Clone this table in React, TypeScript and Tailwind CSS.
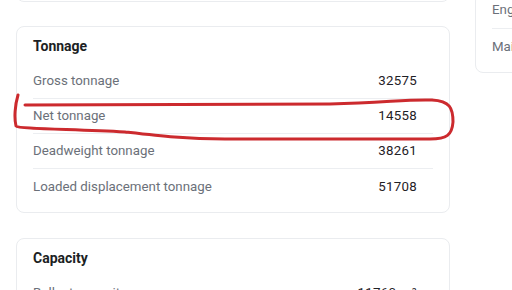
import React from "react";

type Row = { label: string; value: string };

const tonnage: Row[] = [
  { label: "Gross tonnage", value: "32575" },
  { label: "Net tonnage", value: "14558" },
  { label: "Deadweight tonnage", value: "38261" },
  { label: "Loaded displacement tonnage", value: "51708" },
];

const capacity: Row[] = [
  { label: "Ballast capacity", value: "11760 m³" },
  { label: "Fuel capacity", value: "2400 m³" },
];

function Rows({ rows }: { rows: Row[] }) {
  return (
    <div className="flex flex-col">
      {rows.map((r, i) => (
        <div
          key={r.label}
          className={
            "flex h-[35px] items-center justify-between " +
            (i < rows.length - 1 ? "border-b border-[#eceef1]" : "")
          }
        >
          <span className="text-[13.3px] text-[#6b7079]">{r.label}</span>
          <span className="pr-4 text-[13.3px] font-normal tracking-[0.3px] text-[#1f2126]">{r.value}</span>
        </div>
      ))}
    </div>
  );
}

function Card({ title, rows }: { title: string; rows: Row[] }) {
  return (
    <div className="w-[434px] rounded-lg border border-[#eaecef] bg-white px-4 pt-[9px] pb-2">
      <div className="mb-2 text-[14px] leading-5 font-bold text-[#1c1f24]">{title}</div>
      <Rows rows={rows} />
    </div>
  );
}

export default function App() {
  return (
    <div
      className="relative h-[290px] w-[512px] overflow-hidden bg-white"
      style={{ fontFamily: "Roboto, 'Noto Sans', sans-serif" }}
    >
      <div className="flex items-start gap-[25px] pl-4">
        <div className="flex flex-col">
          <div className="-mt-[38px] h-[40px] w-[434px] rounded-lg border border-[#eaecef] bg-white" />
          <div className="mt-6">
            <Card title="Tonnage" rows={tonnage} />
          </div>
          <div className="mt-[25px]">
            <Card title="Capacity" rows={capacity} />
          </div>
        </div>
        <div className="-mt-[7px] w-[220px] shrink-0 rounded-lg border border-[#eaecef] bg-white pl-4 pb-2">
          <div className="flex h-[35px] items-center border-b border-[#eceef1] pb-[2px]">
            <span className="text-[13.3px] text-[#6b7079]">Engine type</span>
          </div>
          <div className="flex h-[35px] items-center">
            <span className="text-[13.3px] text-[#6b7079]">Main engine power</span>
          </div>
        </div>
      </div>
      <svg
        className="pointer-events-none absolute left-0 top-0"
        width="512"
        height="290"
        viewBox="0 0 512 290"
      >
        <path
          d="M 18 95 C 15 105, 14 118, 16 126 C 18 129, 70 129, 125 132 C 160 136, 185 139, 225 139 L 430 139 C 447 139, 452 135, 453 122 C 453 108, 450 101, 432 100 C 405 99, 385 103, 330 104 L 25 105"
          fill="none"
          stroke="#cc2a2e"
          strokeWidth="3"
          strokeLinecap="round"
          strokeLinejoin="round"
        />
      </svg>
    </div>
  );
}
